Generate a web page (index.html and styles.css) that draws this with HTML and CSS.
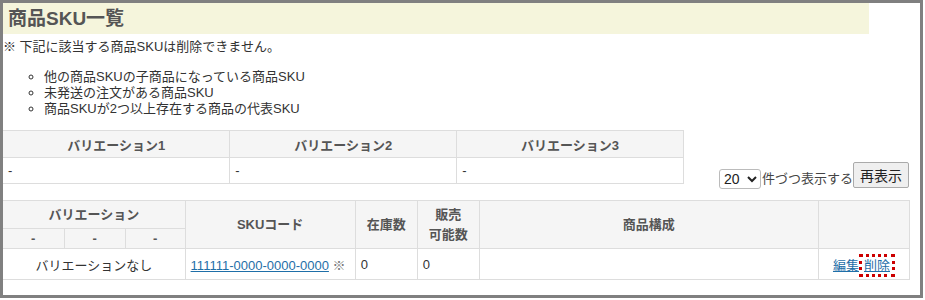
FILE: index.html
```html
<!DOCTYPE html>
<html lang="ja">
<head>
    <meta charset="UTF-8">
    <title>商品SKU一覧</title>
    <link rel="stylesheet" href="styles.css">
</head>
<body>
<div class="frame">
    <h1 class="page-title">商品SKU一覧</h1>

    <p class="note">※ 下記に該当する商品SKUは削除できません。</p>
    <ul class="note-list">
        <li>他の商品SKUの子商品になっている商品SKU</li>
        <li>未発送の注文がある商品SKU</li>
        <li>商品SKUが2つ以上存在する商品の代表SKU</li>
    </ul>

    <div class="filter-row">
        <table class="grid var-table">
            <tr>
                <th>バリエーション1</th>
                <th>バリエーション2</th>
                <th>バリエーション3</th>
            </tr>
            <tr>
                <td>-</td>
                <td>-</td>
                <td>-</td>
            </tr>
        </table>
        <form class="paging">
            <select class="per-page">
                <option>20</option>
                <option>50</option>
                <option>100</option>
            </select><span class="per-page-label">件づつ表示する</span><button type="button" class="reload">再表示</button>
        </form>
    </div>

    <table class="grid sku-table">
        <colgroup>
            <col class="w-sub">
            <col class="w-sub">
            <col class="w-sub2">
            <col class="w-code">
            <col class="w-num">
            <col class="w-num">
            <col class="w-set">
            <col class="w-act">
        </colgroup>
        <tr class="head1">
            <th colspan="3">バリエーション</th>
            <th rowspan="2">SKUコード</th>
            <th rowspan="2">在庫数</th>
            <th rowspan="2">販売<br>可能数</th>
            <th rowspan="2">商品構成</th>
            <th rowspan="2"></th>
        </tr>
        <tr class="head2">
            <th>-</th>
            <th>-</th>
            <th>-</th>
        </tr>
        <tr class="row">
            <td colspan="3" class="center">バリエーションなし</td>
            <td><a href="#">111111-0000-0000-0000</a> <span class="mark">※</span></td>
            <td>0</td>
            <td>0</td>
            <td></td>
            <td class="actions"><a href="#">編集</a><a href="#" class="del">削除</a></td>
        </tr>
    </table>
</div>
</body>
</html>
```

FILE: styles.css
```css
* {
    margin: 0;
    padding: 0;
    box-sizing: border-box;
}

body {
    font-family: "Liberation Sans", "Noto Sans CJK JP", sans-serif;
    font-size: 13px;
    color: #333;
    background: #fff;
}

.frame {
    width: 923px;
    height: 298px;
    border: 3px solid #808080;
}

.page-title {
    width: 866px;
    height: 31px;
    line-height: 31px;
    background: #f5f5dc;
    color: #555;
    font-size: 19px;
    padding-left: 5px;
}

.note {
    margin-top: 5px;
    line-height: 16px;
}

.note-list {
    margin-top: 14px;
    padding-left: 41px;
    list-style: circle;
    line-height: 16px;
}

.filter-row {
    display: flex;
    justify-content: space-between;
    align-items: flex-start;
    margin-top: 13px;
    padding-right: 11px;
}

.grid {
    border-collapse: collapse;
}

.grid th,
.grid td {
    border: 1px solid #ddd;
}

.grid th {
    background: #f5f5f5;
    color: #555;
    font-weight: bold;
    text-align: center;
}

.grid td {
    padding: 0 5px;
}

.var-table {
    width: 681px;
    table-layout: fixed;
    border-left: 0;
}

.var-table tr:first-child {
    height: 27px;
}

.var-table tr + tr {
    height: 26px;
}

.var-table th:first-child,
.var-table td:first-child {
    border-left: 0;
}

.paging {
    display: flex;
    align-items: flex-end;
    margin-top: 32px;
}

.per-page {
    width: 42px;
    height: 20px;
    font-family: "Liberation Sans", sans-serif;
    font-size: 14px;
    color: #222;
    border: 1px solid #bbb;
    border-radius: 3px;
    background: #fff;
}

.per-page-label {
    font-size: 13px;
    line-height: 20px;
    color: #444;
    margin-left: 1px;
}

.reload {
    height: 26px;
    padding: 0 6px;
    margin-bottom: 1px;
    font-family: "Liberation Sans", "Noto Sans CJK JP", sans-serif;
    font-size: 14px;
    color: #222;
    background: #efefef;
    border: 1px solid #aaa;
    border-radius: 2px;
}

.sku-table {
    width: 907px;
    table-layout: fixed;
    margin-top: 11px;
    border-left: 0;
}

.sku-table tr > :first-child {
    border-left: 0;
}

.w-sub { width: 61px; }
.w-sub2 { width: 60px; }
.w-code { width: 170px; }
.w-num { width: 62px; }
.w-set { width: 339px; }
.w-act { width: 91px; }

.head1 {
    height: 28px;
}

.head1 th {
    line-height: 20px;
}

.head2 {
    height: 20px;
}

.row {
    height: 31px;
}

.grid .center {
    text-align: center;
}

.grid a {
    color: #1f6fa8;
    text-decoration: underline;
}

.mark {
    color: #777;
}

.grid .actions {
    text-align: right;
    padding-right: 18px;
}

.del {
    margin-left: 4px;
    padding: 0 1px;
    outline: 3px dotted #c00;
    outline-offset: 1px;
}
```
